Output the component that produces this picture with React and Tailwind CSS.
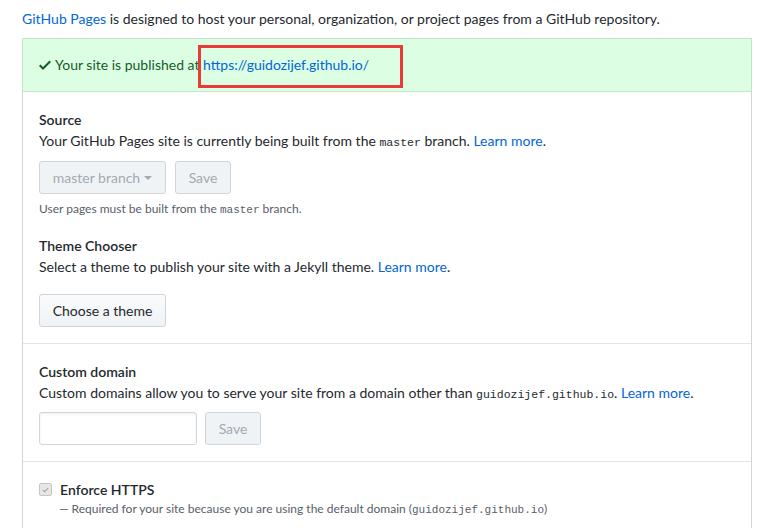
import React from "react";

const mono = "font-['Consolas','Liberation_Mono',monospace] leading-none";

const Link = ({ children }) => <a className="text-[#0366d6]">{children}</a>;

const Btn = ({ children, disabled, className = "" }) => (
    <button
        className={`h-[33px] rounded-[3px] border border-[#d1d5da] px-3 text-[14px] ${
            disabled
                ? "bg-[#eff3f6] text-[#a3aab1]"
                : "bg-gradient-to-b from-[#fafbfc] to-[#eff3f6] text-[#24292e]"
        } ${className}`}
    >
        {children}
    </button>
);

const Section = ({ children, last }) => (
    <div className={`px-4 pt-[17px] pb-4 ${last ? "" : "border-b border-[#e1e4e8]"}`}>
        {children}
    </div>
);

export default function App() {
    return (
        <div className="min-h-[528px] bg-white pt-2 pl-[22px] pr-[25px] font-['Segoe_UI','Lato','Open_Sans',sans-serif] text-[14px] leading-[21px] text-[#24292e]">
            <p className="mb-[9px]">
                <Link>GitHub Pages</Link> is designed to host your personal, organization, or project pages from a GitHub repository.
            </p>

            <div className="rounded-[3px] border border-[#d1d5da]">
                <div className="relative -mx-px -mt-px border border-[#c3e6cb] bg-[#dcffe4] px-4 py-4 leading-[20px] text-[#165c26]">
                    <span className="flex items-center gap-1">
                        <svg width="12" height="16" viewBox="0 0 12 16" className="fill-[#165c26]">
                            <path d="M12 5l-8 8-4-4 1.5-1.5L4 10l6.5-6.5L12 5z" />
                        </svg>
                        <span>
                            Your site is published at <Link>https://guidozijef.github.io/</Link>
                        </span>
                    </span>
                    <div className="absolute left-[175px] top-[6px] h-[43px] w-[205px] border-[3px] border-[#ea3a3a]"></div>
                </div>

                <Section>
                    <h3 className="font-semibold">Source</h3>
                    <p>
                        Your GitHub Pages site is currently being built from the <code className={`${mono} text-[11.5px]`}>master</code> branch.{" "}
                        <Link>Learn more</Link>.
                    </p>
                    <div className="mt-[10px] flex gap-[9px]">
                        <Btn disabled className="flex w-[127px] items-center justify-center gap-1">
                            master branch
                            <svg width="8" height="4" viewBox="0 0 8 4" className="fill-[#a3aab1]">
                                <path d="M0 0h8L4 4z" />
                            </svg>
                        </Btn>
                        <Btn disabled className="w-[56px]">Save</Btn>
                    </div>
                    <p className="mt-[6px] text-[12px] leading-[18px] text-[#586069]">
                        User pages must be built from the <code className={`${mono} text-[11px]`}>master</code> branch.
                    </p>
                    <h3 className="mt-[17px] font-semibold">Theme Chooser</h3>
                    <p>
                        Select a theme to publish your site with a Jekyll theme. <Link>Learn more</Link>.
                    </p>
                    <Btn className="mt-[17px] w-[127px]">Choose a theme</Btn>
                </Section>

                <Section>
                    <h3 className="font-semibold">Custom domain</h3>
                    <p>
                        Custom domains allow you to serve your site from a domain other than{" "}
                        <code className={`${mono} text-[11.5px]`}>guidozijef.github.io</code>. <Link>Learn more</Link>.
                    </p>
                    <div className="mt-[9px] flex gap-2">
                        <input className="h-[33px] w-[158px] rounded-[3px] border border-[#d1d5da] bg-white px-2 shadow-[inset_0_1px_2px_rgba(27,31,35,0.075)]" />
                        <Btn disabled className="w-[56px]">Save</Btn>
                    </div>
                </Section>

                <Section last>
                    <label className="flex items-center gap-2">
                        <span className="flex h-[13px] w-[13px] items-center justify-center rounded-[2px] border border-[#c5c5c5] bg-[#e6e6e6]">
                            <svg width="9" height="8" viewBox="0 0 12 16">
                                <path d="M12 5l-8 8-4-4 1.5-1.5L4 10l6.5-6.5L12 5z" className="fill-[#a0a0a0]" />
                            </svg>
                        </span>
                        <span className="text-[14px] font-semibold">Enforce HTTPS</span>
                    </label>
                    <p className="pl-5 text-[12px] leading-[18px] text-[#586069]">
                        — Required for your site because you are using the default domain (
                        <code className={`${mono} text-[11px]`}>guidozijef.github.io</code>)
                    </p>
                </Section>
            </div>
        </div>
    );
}
